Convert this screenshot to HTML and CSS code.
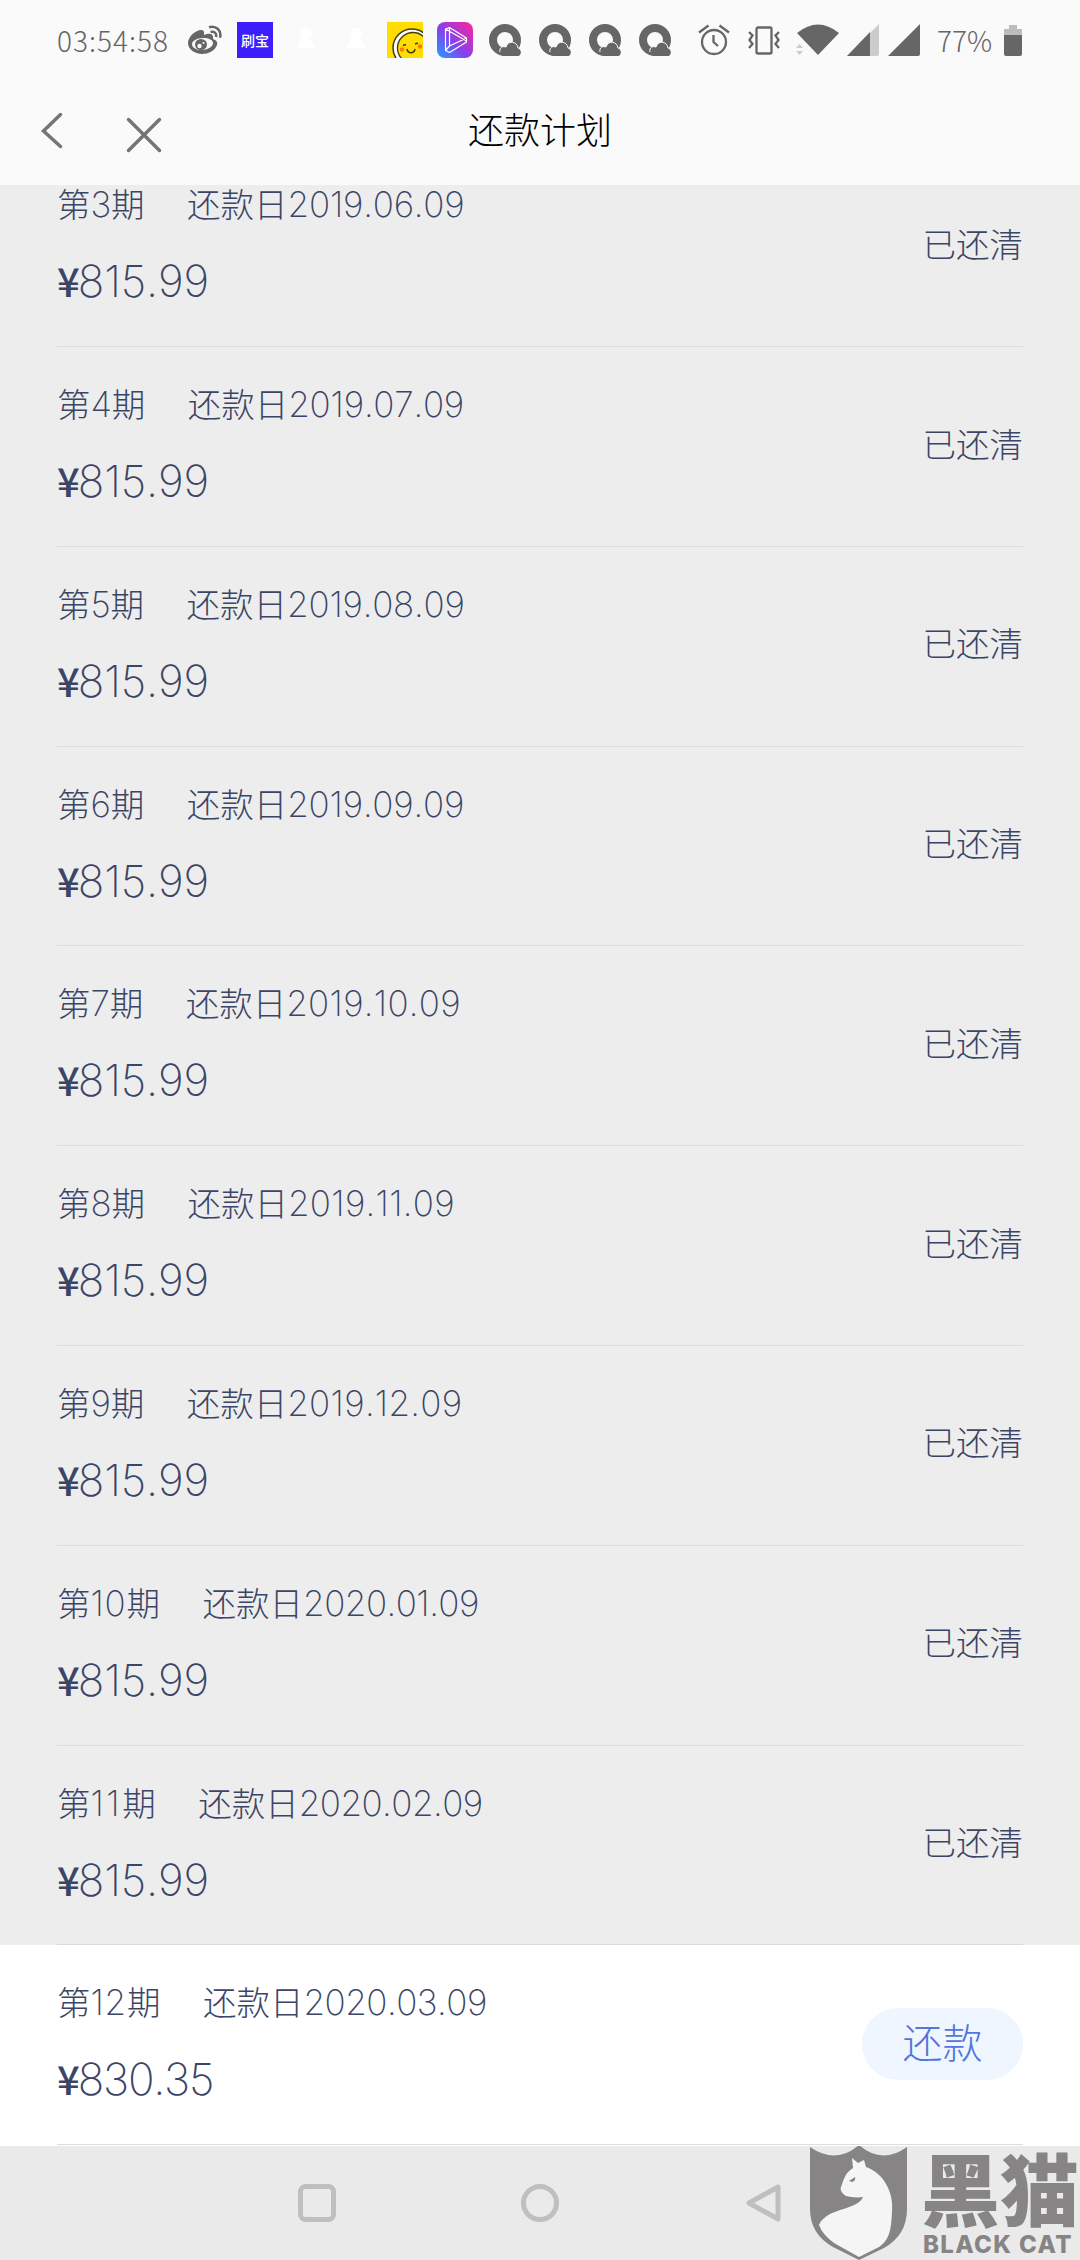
FILE: index.html
```html
<!DOCTYPE html>
<html lang="zh-CN">
<head>
<meta charset="utf-8">
<title>还款计划</title>
<link rel="stylesheet" href="styles.css">
</head>
<body>
<header class="top">
  <div class="status">
    <span class="clock">03:54:58</span>
    <svg class="weibo" width="36" height="30" viewBox="0 0 36 30"><path fill="#666" fill-rule="evenodd" d="M1 18C1 11 10 4 15 5c3 1 2 4 2 5 4-2 9-2 9 2v2c3 1 5 3 4 6-2 6-9 9-15 9S1 25 1 18zm4 1c0 4 5 6 10 6s11-3 11-7c0-3-4-5-10-5S5 16 5 19z"/><ellipse cx="14" cy="19.500" rx="6" ry="5.500" fill="#666"/><circle cx="12.500" cy="21" r="2.200" fill="#fafafa"/><circle cx="16.500" cy="18" r="1" fill="#fafafa"/><path d="M22 2.300c7-2 13 3 11 10.500M23.500 7c4-1 6.500 1.500 5.500 5" fill="none" stroke="#666" stroke-width="2.500"/></svg>
    <span class="shuabao">刷宝</span>
    <svg class="ghost one" width="20" height="24" viewBox="0 0 20 24"><path fill="#fff" d="M4 5c0-7 12-7 12 0 0 4-1 5-3 6 3 1 5 5 6 9H1c1-4 2-8 5-9-2-1-2-3-2-6z"/></svg>
    <svg class="ghost two" width="20" height="24" viewBox="0 0 20 24"><path fill="#fff" d="M4 5c0-7 12-7 12 0 0 4-1 5-3 6 3 1 5 5 6 9H1c1-4 2-8 5-9-2-1-2-3-2-6z"/></svg>
    <svg class="smile" width="36" height="36" viewBox="0 0 36 36"><path fill="#fd0" d="M0 0h36v36H0z"/><circle cx="25" cy="26" r="19" fill="#fff" stroke="#443b16" stroke-width="1.500"/><circle cx="26" cy="26" r="15.500" fill="#fd0" stroke="#443b16" stroke-width="1.300"/><circle cx="15" cy="27.500" r="2.200" fill="#f87a20"/><circle cx="33" cy="24.500" r="2.200" fill="#f87a20"/><path fill="none" stroke="#443b16" stroke-width="1.500" d="M20 27c1 5 7 5 8 0M16 23.500l3-1M28 22l3-1"/></svg>
    <svg class="video" width="36" height="36" viewBox="0 0 36 36"><defs><linearGradient id="vg" x1="0" y1="1" x2="1" y2="0"><stop offset="0" stop-color="#20a0ff"/><stop offset=".45" stop-color="#8540ee"/><stop offset="1" stop-color="#ff2596"/></linearGradient></defs><rect width="36" height="36" rx="8" fill="url(#vg)"/><path fill="none" stroke="#fff" stroke-width="1.200" stroke-linejoin="round" d="M8.500 7l4-1.500L29.500 16v4L12.500 30.500l-4-2zM12.500 5.500v18.500l-4 4.500M12.500 24l17-8M8.500 7l21 12"/></svg>
    <svg class="q" width="32" height="32" viewBox="0 0 32 32"><use href="#qi"/></svg>
    <svg class="q" width="32" height="32" viewBox="0 0 32 32"><use href="#qi"/></svg>
    <svg class="q" width="32" height="32" viewBox="0 0 32 32"><use href="#qi"/></svg>
    <svg class="q" width="32" height="32" viewBox="0 0 32 32"><defs><g id="qi"><circle cx="16" cy="16" r="12" fill="none" stroke="#666" stroke-width="8"/><path fill="#666" stroke="#fafafa" stroke-width="1" d="M11 28c-1-5 3-6 6-5 2-7 11-6 12 1 3 1 3 3 3 5"/><path fill="#666" d="M12 27h19.500q1 5-3.500 5H14z"/></g></defs><use href="#qi"/></svg>
    <svg class="alarm" width="32" height="32" viewBox="0 0 32 32" fill="none" stroke="#666" stroke-width="2.300"><circle cx="16" cy="18" r="12"/><path d="M1 8.500L10.500 1.500M31 8.500L21.500 1.500M15.500 11v7l4.500 4"/></svg>
    <svg class="vibrate" width="32" height="30" viewBox="0 0 32 30" fill="none" stroke="#666" stroke-width="2.300"><rect x="8.500" y="2.500" width="15" height="26" rx="1.500"/><path d="M1 7l3.500 3.500L1.500 15l3 4L1 23M31 7l-3.500 3.500L30.500 15l-3 4L31 23"/></svg>
    <svg class="wifi" width="44" height="32" viewBox="0 0 44 32"><path fill="#666" d="M1 9Q22-8 43 9L22 31z"/><path fill="#ccc" d="M0 24l3.500-4 3.500 4zM0 27h7l-3.500 4z"/></svg>
    <svg class="signal" width="32" height="32" viewBox="0 0 32 32"><path fill="#ccc" d="M0 32L32 0v30q0 2-2 2z"/><path fill="#666" d="M0 32L23 8v24z"/></svg>
    <svg class="signal full" width="32" height="32" viewBox="0 0 32 32"><path fill="#666" d="M0 32L32 0v30q0 2-2 2z"/></svg>
    <span class="percent">77%</span>
    <svg class="battery" width="18" height="31" viewBox="0 0 18 31"><path fill="#bcbcbc" d="M5 0h8v4h5v6H0V4h5z"/><path fill="#666" d="M0 10h18v19q0 2-2 2H2q-2 0-2-2z"/></svg>
  </div>
  <nav class="bar">
    <svg class="back" width="24" height="40" viewBox="0 0 24 40"><path d="M20.500 3.500L3.500 20l17 15.500"/></svg>
    <svg class="close" width="36" height="36" viewBox="0 0 36 36"><path d="M2.500 2.500l31 31M33.500 2.500l-31 31"/></svg>
    <h1 class="title">还款计划</h1>
  </nav>
</header>
<main class="list">
  <section class="item first"><div><p class="term"><span>第<b>3</b>期</span><span>还款日<b>2019.06.09</b></span></p><p class="sum"><i>¥</i>815.99</p></div><span class="state">已还清</span></section>
  <section class="item"><div><p class="term"><span>第<b>4</b>期</span><span>还款日<b>2019.07.09</b></span></p><p class="sum"><i>¥</i>815.99</p></div><span class="state">已还清</span></section>
  <section class="item"><div><p class="term"><span>第<b>5</b>期</span><span>还款日<b>2019.08.09</b></span></p><p class="sum"><i>¥</i>815.99</p></div><span class="state">已还清</span></section>
  <section class="item"><div><p class="term"><span>第<b>6</b>期</span><span>还款日<b>2019.09.09</b></span></p><p class="sum"><i>¥</i>815.99</p></div><span class="state">已还清</span></section>
  <section class="item"><div><p class="term"><span>第<b>7</b>期</span><span>还款日<b class="loose">2019.10.09</b></span></p><p class="sum"><i>¥</i>815.99</p></div><span class="state">已还清</span></section>
  <section class="item"><div><p class="term"><span>第<b>8</b>期</span><span>还款日<b class="loose">2019.11.09</b></span></p><p class="sum"><i>¥</i>815.99</p></div><span class="state">已还清</span></section>
  <section class="item"><div><p class="term"><span>第<b>9</b>期</span><span>还款日<b class="loose">2019.12.09</b></span></p><p class="sum"><i>¥</i>815.99</p></div><span class="state">已还清</span></section>
  <section class="item"><div><p class="term"><span>第<b class="wide">10</b>期</span><span>还款日<b class="tight">2020.01.09</b></span></p><p class="sum"><i>¥</i>815.99</p></div><span class="state">已还清</span></section>
  <section class="item"><div><p class="term"><span>第<b class="wider">11</b>期</span><span>还款日<b class="tight">2020.02.09</b></span></p><p class="sum"><i>¥</i>815.99</p></div><span class="state">已还清</span></section>
  <section class="item due"><div><p class="term"><span>第<b class="wide">12</b>期</span><span>还款日<b class="tight">2020.03.09</b></span></p><p class="sum"><i>¥</i>830.35</p></div><button class="pay">还款</button></section>
</main>
<footer class="keys">
  <svg class="recent" width="38" height="38" viewBox="0 0 38 38"><rect x="2.500" y="2.500" width="33" height="33" rx="5"/></svg>
  <svg class="home" width="40" height="40" viewBox="0 0 40 40"><circle cx="20" cy="20" r="16.500"/></svg>
  <svg class="prev" width="38" height="40" viewBox="0 0 38 40"><path d="M33 4v32L4 20z"/></svg>
  <div class="brand">
    <svg class="shield" width="98" height="116" viewBox="0 0 98 116"><path fill="#868485" d="M0 2q26 18 49-2 23 20 48 2v62q0 26-23 39L49 115 23 102Q0 89 0 64z"/><path fill="#f5f5f5" d="M42 13l6 5 6-3 2 7c18 6 28 26 26 45-1 20-3 28-13 35L49 112 24 98Q12 89 9 80c8-18 38-14 44-28-6 1-13 0-17-1-5-3-6-7-5-9 3-8 4-14 12-19z"/><path fill="#868485" d="M39 36l6-4q1 4-3 5z"/></svg>
    <div class="words"><span class="cn">黑猫</span><span class="en">BLACK CAT</span></div>
  </div>
</footer>
</body>
</html>
```
FILE: styles.css
```css
* { box-sizing: border-box; }
body { margin: 0; width: 1080px; height: 2260px; overflow: hidden; display: flex; flex-direction: column; background: #ededed; font-family: "Noto Sans CJK SC", sans-serif; font-weight: 300; color: #3b4566; }
p, h1 { margin: 0; font-weight: inherit; }
svg { flex: none; display: block; }
.top { height: 185px; flex: none; background: #fafafa; display: flex; flex-direction: column; }
.status { height: 80px; display: flex; align-items: center; color: #666; }
.clock { width: 114px; margin-left: 57px; font-size: 28px; letter-spacing: 1px; white-space: nowrap; }
.weibo { margin: 0 14px 0 16px; }
.shuabao { width: 36px; height: 36px; background: #3d1ffb; color: #fff; font-size: 14px; font-weight: 500; line-height: 36px; text-align: center; }
.ghost.one { margin-left: 23px; }
.ghost.two { margin-left: 30px; }
.smile { margin-left: 21px; }
.video { margin: 0 -2px 0 14px; }
.q { margin-left: 18px; }
.alarm { margin-left: 27px; }
.vibrate { margin-left: 18px; }
.wifi { margin-left: 16px; }
.signal { margin-left: 7px; }
.signal.full { margin-left: 9px; }
.percent { width: 56px; margin: 0 11px 0 17px; font-size: 28px; white-space: nowrap; }
.bar { height: 105px; display: flex; align-items: center; }
.bar svg { fill: none; stroke: #757575; stroke-width: 3.500; stroke-linecap: round; }
.back { margin: 0 0 3px 40px; }
.close { margin: 4px 0 0 62px; }
.title { margin: 0 0 9px 306px; font-size: 36px; line-height: 52px; color: #000; }
.list { height: 1961px; flex: none; overflow: hidden; }
.item { height: 199.800px; padding: 38px 57px 0; display: flex; justify-content: space-between; align-items: flex-start; position: relative; }
.item::after { content: ""; position: absolute; left: 57px; right: 57px; bottom: 0; height: 1px; background: #dcdcdc; }
.item.first { margin-top: -37.800px; }
.term { display: flex; gap: 42.500px; font-size: 33.500px; line-height: 36px; white-space: nowrap; }
.term b { font-family: Inter, sans-serif; font-size: 35px; line-height: 0; font-weight: 200; letter-spacing: -.200px; font-kerning: none; }
.term .loose { letter-spacing: .300px; }
.term .tight { letter-spacing: -.500px; }
.term .wide { letter-spacing: .800px; }
.term .wider { letter-spacing: 2.500px; }
.sum { margin-top: 32px; font-family: Inter, sans-serif; font-size: 44px; line-height: 56px; font-weight: 200; letter-spacing: -.200px; font-kerning: none; }
.due .sum { letter-spacing: -1.300px; }
.sum i { margin-right: -2px; font-style: normal; font-family: "Noto Sans CJK SC", sans-serif; font-weight: 500; font-size: 40px; line-height: 0; letter-spacing: 0; }
.state { margin-top: 35.500px; font-size: 33.500px; line-height: 44px; }
.item.due { height: 200.600px; background: #fff; }
.due::after { bottom: 1px; }
.pay { width: 161px; height: 72px; margin-top: 25px; border: 0; border-radius: 36px; padding: 0 0 6px; background: #eff6ff; color: #5076df; font: 300 40px/64px "Noto Sans CJK SC", sans-serif; }
.keys { height: 114px; flex: none; background: #eaeaea; display: flex; align-items: center; }
.keys > svg { fill: none; stroke: #bfbfbf; stroke-width: 5; stroke-linejoin: round; }
.recent { margin-left: 298px; }
.home { margin-left: 184px; }
.prev { margin-left: 185px; }
.brand { margin-left: 27px; display: flex; color: #868485; }
.words { display: flex; flex-direction: column; margin-left: 13px; white-space: nowrap; }
.cn { font-size: 79px; font-weight: 900; line-height: 84px; }
.en { margin: 4px 0 0 2px; font: 800 24px/24px Inter, sans-serif; letter-spacing: 1.400px; }
```
